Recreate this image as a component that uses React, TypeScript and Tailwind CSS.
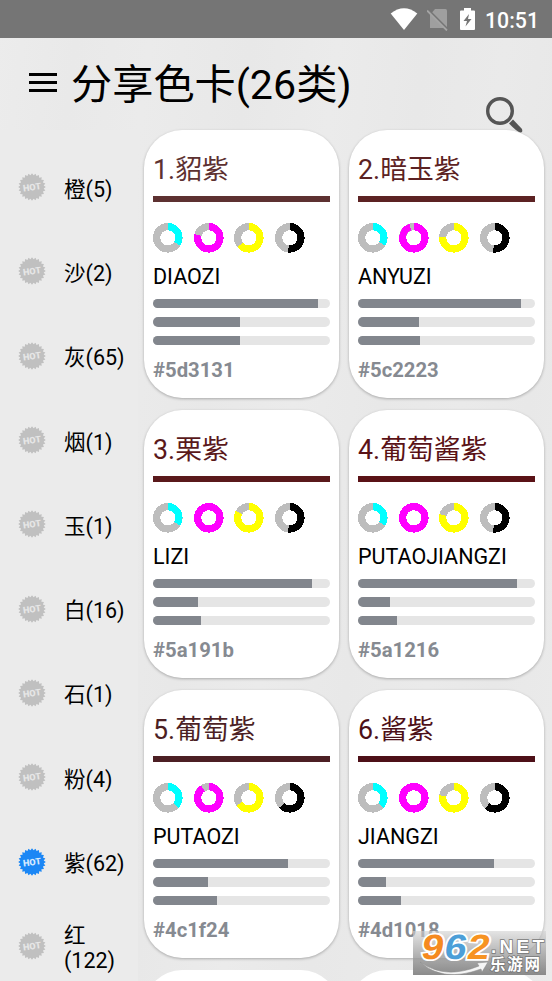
interface ColorCardData {
  name: string;
  pinyin: string;
  hex: string;
  cmyk: [number, number, number, number];
  rgb: [number, number, number];
}

interface Category {
  name: string;
  count: number;
}

const categories: Category[] = [
  { name: '橙', count: 5 },
  { name: '沙', count: 2 },
  { name: '灰', count: 65 },
  { name: '烟', count: 1 },
  { name: '玉', count: 1 },
  { name: '白', count: 16 },
  { name: '石', count: 1 },
  { name: '粉', count: 4 },
  { name: '紫', count: 62 },
  { name: '红', count: 122 },
];

const colors: ColorCardData[] = [
  { name: '貂紫', pinyin: 'DIAOZI', hex: '#5d3131', cmyk: [34, 79, 64, 52], rgb: [93, 49.4, 49.4] },
  { name: '暗玉紫', pinyin: 'ANYUZI', hex: '#5c2223', cmyk: [34, 95, 76, 52], rgb: [92, 34.2, 35] },
  { name: '栗紫', pinyin: 'LIZI', hex: '#5a191b', cmyk: [34, 100, 83, 52], rgb: [90, 25.2, 27.3] },
  { name: '葡萄酱紫', pinyin: 'PUTAOJIANGZI', hex: '#5a1216', cmyk: [34, 100, 79, 52], rgb: [90, 18.1, 22] },
  { name: '葡萄紫', pinyin: 'PUTAOZI', hex: '#4c1f24', cmyk: [37, 91, 66, 63], rgb: [76.1, 31.3, 36.4] },
  { name: '酱紫', pinyin: 'JIANGZI', hex: '#4d1018', cmyk: [37, 100, 78, 62], rgb: [77, 15.9, 24.2] },
];

const inkColors = ['#00ffff', '#ff00ff', '#ffff00', '#000000'];

function StatusBar() {
  return (
    <div className="flex h-[38px] shrink-0 items-center justify-end bg-[#757575] pr-[13px]">
      <svg width="28" height="22" viewBox="0 0 28 22" className="mr-[9px]">
        <path d="M.7 5.5Q14-5.2 27.3 5.5L14 22Z" fill="#fff" />
      </svg>
      <svg width="22" height="24" viewBox="0 0 22 24" className="mr-[11px]">
        <path d="M8 2h10.500q1.500 0 1.500 1.500V21H3V8Z" fill="#9f9f9f" />
        <path d="M1 2.500 21 22.500" stroke="#757575" strokeWidth="2" />
        <path d="M0 3.500 20 23.500" stroke="#a5a5a5" strokeWidth="1.800" />
      </svg>
      <svg width="15" height="22" viewBox="0 0 15 22" className="mr-[10px]">
        <path d="M4 0h7v2.500h3q1 0 1 1V21q0 1-1 1H1q-1 0-1-1V3.500q0-1 1-1h3Z" fill="#fff" />
        <path d="M9 6 3.500 13H7L5.500 18.500 11.500 11H8Z" fill="#757575" />
      </svg>
      <span className="mt-[3px] text-[21.3px] leading-6 font-medium text-white">10:51</span>
    </div>
  );
}

function Header() {
  return (
    <header className="flex h-[92px] shrink-0 items-start pl-[29px]">
      <div className="mt-[35px] flex w-7 flex-col gap-[5px]">
        <span className="h-[3px] bg-black" />
        <span className="h-[3px] bg-black" />
        <span className="h-[3px] bg-black" />
      </div>
      <h1 className="mt-[17px] ml-[14px] text-[41.2px] leading-[60px] text-black">分享色卡(26类)</h1>
      <svg width="40" height="38" viewBox="0 0 40 38" className="relative z-10 mt-[58px] mr-[28px] ml-auto shrink-0">
        <circle cx="16" cy="15" r="12.300" fill="none" stroke="#555" strokeWidth="3.400" />
        <path d="M25 27.500 29 23.500 38 33Q39 36.500 36.500 36.500 33 36 25 27.500Z" fill="#555" />
      </svg>
    </header>
  );
}

function HotBadge({ active }: { active: boolean }) {
  const points = Array.from({ length: 48 }, (_, i) => {
    const r = i % 2 ? 11.8 : 13.8;
    const a = (i * Math.PI) / 24;
    return `${14 + r * Math.sin(a)},${14 - r * Math.cos(a)}`;
  }).join(' ');

  return (
    <svg width="28" height="28" viewBox="0 0 28 28" className="shrink-0">
      <polygon points={points} fill={active ? '#1b87f5' : '#c0c0c0'} />
      <text
        x="14"
        y="17.300"
        textAnchor="middle"
        fontSize="9"
        fontWeight="900"
        textLength="18"
        lengthAdjust="spacingAndGlyphs"
        fill={active ? '#d5eaff' : '#e6e6e6'}
        transform="rotate(-8 14 14)"
      >
        HOT
      </text>
    </svg>
  );
}

function Donut({ value, color }: { value: number; color: string }) {
  return (
    <svg width="30" height="30" viewBox="0 0 30 30" shapeRendering="crispEdges">
      <circle cx="14.800" cy="14.800" r="11.200" fill="none" stroke="#bdbdbd" strokeWidth="7.200" />
      <circle
        cx="14.800"
        cy="14.800"
        r="11.200"
        fill="none"
        stroke={color}
        strokeWidth="7.200"
        pathLength="100"
        strokeDasharray={`${value} 100`}
        transform="rotate(-90 14.8 14.8)"
      />
    </svg>
  );
}

function ColorCard({ data, index }: { data: ColorCardData; index: number }) {
  return (
    <div className="h-[268px] rounded-[38px] bg-white px-[9px] pt-[22px] shadow-[0_1px_3px_rgba(0,0,0,0.28)]">
      <h2 className="h-9 text-[26.8px] leading-9 whitespace-nowrap" style={{ color: data.hex }}>
        {index}.{data.name}
      </h2>
      <div className="mt-2 h-[6px]" style={{ backgroundColor: data.hex }} />
      <div className="mt-[20.5px] flex gap-[10.6px]">
        {data.cmyk.map((value, i) => (
          <Donut key={i} value={value} color={inkColors[i]} />
        ))}
      </div>
      <div className="mt-[10.5px] h-7 text-[21.5px] leading-7 text-black">{data.pinyin}</div>
      <div className="mt-[8px] flex flex-col gap-[9px]">
        {data.rgb.map((value, i) => (
          <div key={i} className="h-[9.3px] overflow-hidden rounded-full bg-[#e5e5e5]">
            <div className="h-full bg-[#82868d]" style={{ width: `${value}%` }} />
          </div>
        ))}
      </div>
      <div className="mt-[11.5px] text-[20.3px] leading-7 font-bold text-[#868a91]">{data.hex}</div>
    </div>
  );
}

function Watermark() {
  return (
    <div className="absolute top-[931px] left-[413px] h-11 w-[133px] bg-linear-to-b from-[#d2d2d2]/60 to-[#858585]/95">
      <svg width="133" height="44" viewBox="0 0 133 44">
        <g
          fontFamily="Liberation Sans, sans-serif"
          fontWeight="700"
          fontSize="35"
          transform="translate(7 28) skewX(-10)"
        >
          <g stroke="#fff" strokeWidth="3.500" paintOrder="stroke">
            <text x="0" y="0" fill="#f58a20" textLength="22" lengthAdjust="spacingAndGlyphs">9</text>
            <text x="23" y="0" fill="#4c9fd8" textLength="22" lengthAdjust="spacingAndGlyphs">6</text>
            <text x="46" y="0" fill="#f79322" textLength="22" lengthAdjust="spacingAndGlyphs">2</text>
          </g>
        </g>
        <path d="M7 31Q32 49 66 35L64 32 75 31 69 41 68 38Q30 52 7 31Z" fill="#f5f5f5" stroke="#8b8b8b" strokeWidth=".5" />
        <g fill="#fff" stroke="#777" strokeWidth="1.500" paintOrder="stroke" fontWeight="700">
          <text x="78" y="22" fontSize="19" textLength="53" fontFamily="Liberation Sans, sans-serif">.NET</text>
          <text x="77" y="39" fontSize="15.500" textLength="50">乐游网</text>
        </g>
      </svg>
    </div>
  );
}

export default function App() {
  return (
    <div className="relative flex h-[981px] w-[552px] flex-col overflow-hidden bg-[#e9e9e9] bg-[linear-gradient(97deg,#ececec_0%,#e9e9e9_12%,#ebebeb_23%,#e8e8e8_38%,#ebebeb_51%,#e8e8e8_64%,#eaeaea_76%,#e8e8e8_86%,#ebebeb_100%)] font-['Roboto','Noto_Sans_CJK_SC',sans-serif]">
      <StatusBar />
      <Header />
      <div className="flex min-h-0 flex-1">
        <nav className="w-[138px] shrink-0 bg-[#ebebeb] pt-[16px]">
          {categories.map((item) => (
            <div key={item.name} className="flex h-[84.3px] items-center pl-[18px]">
              <div className="mb-[2px] flex">
                <HotBadge active={item.name === '紫'} />
              </div>
              <div className="mt-[2px] ml-[18px] w-[64px] text-[21.5px] leading-[25px] text-black">
                {item.name}
                {item.count > 99 ? <br /> : null}({item.count})
              </div>
            </div>
          ))}
        </nav>
        <main className="grid flex-1 auto-rows-[268px] grid-cols-[195px_195px] gap-x-[10px] gap-y-3 pl-[6px]">
          {colors.map((data, i) => (
            <ColorCard key={data.hex} data={data} index={i + 1} />
          ))}
          <div className="rounded-[38px] bg-white" />
          <div className="rounded-[38px] bg-white" />
        </main>
      </div>
      <Watermark />
    </div>
  );
}
